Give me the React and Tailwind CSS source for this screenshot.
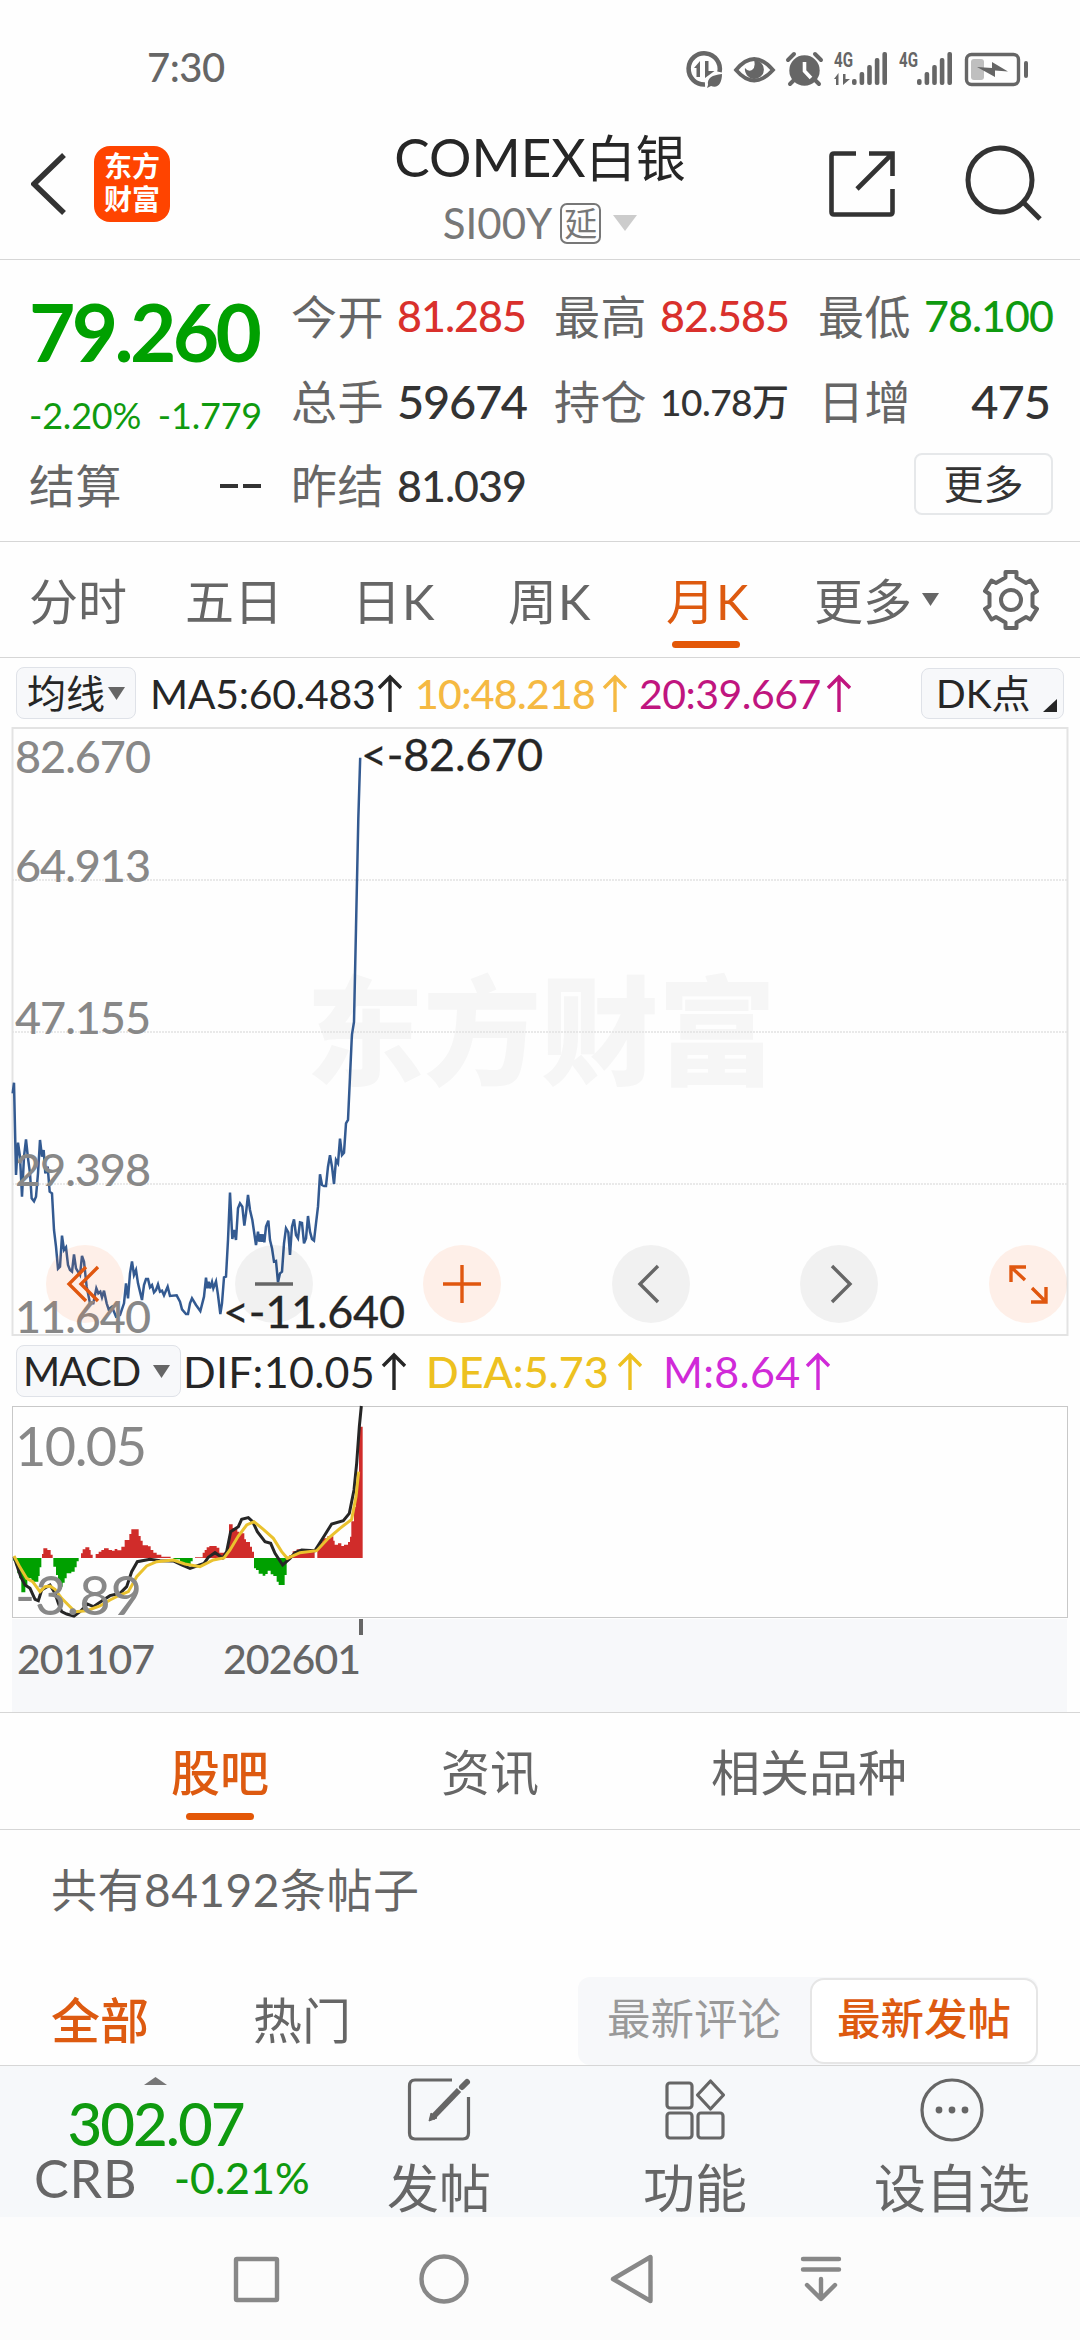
import React from "react";

const PRICE_POINTS =
  "38,160 42,128 48,405 54,308 60,350 66,470 72,350 78,298 84,355 90,400 95,475 102,484 108,470 114,400 120,300 126,350 131,330 136,400 143,380 149,455 156,460 162,570 168,620 174,686 180,680 186,587 192,630 198,622 204,675 210,690 216,695 222,643 228,685 240,705 246,648 252,665 260,740 270,790 280,790 289,745 295,760 301,755 306,772 312,752 320,790 326,808 336,800 348,830 360,825 372,790 378,730 384,775 390,700 396,664 402,705 408,690 414,730 420,755 426,780 432,735 438,717 444,717 450,742 456,735 462,757 468,750 474,733 480,755 486,752 492,766 503,740 510,768 530,766 540,785 546,808 558,822 564,822 570,790 576,775 588,795 601,813 612,770 618,713 622,745 626,725 630,745 636,726 640,745 648,724 654,765 661,822 666,790 672,712 678,710 684,600 690,458 697,597 702,570 708,600 714,505 720,490 727,500 733,557 738,520 744,465 750,510 757,540 768,615 774,575 778,605 782,583 786,605 790,583 793,607 798,560 805,542 810,600 816,625 822,665 828,663 834,727 840,700 846,695 852,610 858,565 865,577 870,645 876,560 882,538 888,585 894,595 900,547 906,549 912,610 918,595 924,528 930,575 936,597 942,602 948,550 954,500 960,403 966,435 972,438 978,438 984,380 990,346 996,380 1002,432 1008,360 1014,370 1020,296 1026,345 1032,338 1038,250 1044,240 1050,110 1055,0 1056,-17 1062,-54 1068,-335 1075,-666 1080.6,-847";

const DIF_POINTS =
  "42,680 62,740 75,765 90,775 105,808 115,812 125,780 150,765 165,790 175,820 185,845 200,852 222,858 240,845 262,822 280,830 310,810 330,797 360,790 380,770 395,725 412,695 450,688 480,692 520,693 545,705 570,715 590,708 612,700 625,682 645,668 668,684 680,665 692,605 715,590 725,568 745,563 758,575 772,605 795,635 812,640 825,670 848,705 870,685 885,668 905,660 945,662 965,630 995,582 1030,572 1048,550 1062,480 1070,400 1078,290 1084,228";

const DEA_POINTS =
  "42,678 60,712 80,745 98,755 120,785 135,770 150,768 165,778 185,805 205,825 225,845 260,842 300,828 330,810 360,795 385,785 410,740 440,708 470,695 520,690 555,702 600,710 640,690 672,684 690,660 715,618 740,585 762,575 790,598 820,625 845,665 862,685 900,668 950,662 985,625 1020,595 1055,568 1068,500 1076,425";

const RED_AREAS = [
  "M126 684V672H130V655H142V660H152V674H158V684Z",
  "M243 684V670H248V658H256V652H268V660H272V674H278V684Z",
  "M287 684V672H296V665H304V660H312V655H326V660H336V662H344V657H352V661H364V650H374V630H388V612H394V598H416V618H422V632H428V646H444V649H452V660H460V668H470V674H484V680H512V684Z",
  "M585 684V682H608V668H614V660H620V652H628V648H650V653H658V668H680V650H684V620H687V583H698V594H712V605H718V610H733V628H738V636H750V650H756V665H762V684Z",
  "M868 684V675H878V664H890V658H925V662H944V684H952V650H960V634H968V625H982V619H1000V632H1004V644H1014V640H1024V648H1032V644H1044V636H1050V620H1054V574H1062V530H1068V490H1073V430H1077V290H1088V684Z",
];

const GREEN_AREAS = [
  "M40 684V692H46V706H52V730H58V745H64V787H76V765H82V745H94V755H115V738H119V712H124V684Z",
  "M160 684V710H168V735H174V770H188V758H194V745H200V730H214V725H224V712H230V694H236V684Z",
  "M520 684V688H540V696H550V702H572V694H578V684Z",
  "M762 684V715H768V720H776V731H788V737H796V732H803V722H812V733H820V738H830V755H836V765H854V735H860V684Z",
];

function Divider() {
  return <div className="h-px w-full shrink-0 bg-[#d6d6d6]" />;
}

function UpArrow() {
  return (
    <svg width="26" height="38" viewBox="0 0 26 38" fill="none" stroke="currentColor" strokeWidth="3.400" className="shrink-0">
      <path d="M13 38V3M2 14L13 3L24 14" />
    </svg>
  );
}

function Caret({ className, w = 17, h = 13 }) {
  return (
    <svg width={w} height={h} viewBox="0 0 17 13" preserveAspectRatio="none" className={className} fill="currentColor">
      <path d="M0 0H17L8.5 13Z" />
    </svg>
  );
}

function SignalBars() {
  return [0, 1, 2, 3, 4].map((i) => (
    <rect key={i} x={i * 7.6} y={[27, 20, 13, 6, 0][i]} width="4.6" height={[6, 13, 20, 27, 33][i]} rx="2" />
  ));
}

function StatusBar() {
  return (
    <div className="flex h-[118px] items-start pl-[147px] pt-[48px] text-[#666]">
      <span className="w-[537px] text-[40px] font-medium leading-[38px] tracking-[-0.5px]">7:30</span>
      <svg width="350" height="44" viewBox="684 45 350 44" fill="#666">
        <g fill="none" stroke="#666" strokeWidth="4.6">
          <path d="M705 81.500A15.600 15.600 0 1 1 719.500 69" />
        </g>
        <path d="M694 65L700 58V74H696.500V65ZM705 58H708.500V68H714.500L705 75Z" />
        <path d="M708 82C707 75 712 72 722 71C722 80 718 86 711 83L707 85Z" />
        <path d="M736 67Q754 45 773 67Q754 88 736 67Z" fill="none" stroke="#666" strokeWidth="3.800" />
        <path d="M754 57A9.500 9.500 0 1 1 745 65Q748 69 752 67Q756 64 754 57Z" />
        <circle cx="804.500" cy="67.500" r="15.200" />
        <path d="M788 57L794 51M821 57L815 51M790 81L794 77M819 81L815 77" stroke="#666" strokeWidth="4" fill="none" strokeLinecap="round" />
        <path d="M804.500 59V68L811 75" stroke="#fff" strokeWidth="3.600" fill="none" />
        <text x="834" y="64" fontSize="21" fontWeight="700" fontFamily="Roboto, sans-serif" textLength="19" lengthAdjust="spacingAndGlyphs">4G</text>
        <path d="M834 76L838.500 70V82H836V76ZM843 71H845.500V76H850L843 82Z" />
        <g transform="translate(852 49)"><SignalBars /></g>
        <text x="899" y="64" fontSize="21" fontWeight="700" fontFamily="Roboto, sans-serif" textLength="19" lengthAdjust="spacingAndGlyphs">4G</text>
        <g transform="translate(917 49)"><SignalBars /></g>
        <rect x="966.500" y="51.500" width="52" height="30" rx="5" fill="none" stroke="#666" strokeWidth="3.400" />
        <rect x="971" y="56" width="13" height="21" rx="3" fill="#bfbfbf" />
        <path d="M977 64L992 65V59L1008 68.500L995 67.500V74Z" />
        <rect x="1024" y="58" width="4" height="17" rx="2" />
      </svg>
    </div>
  );
}

function Header() {
  return (
    <header className="flex h-[141px] items-start text-[#262626]">
      <svg width="36" height="64" viewBox="0 0 36 64" className="ml-[31px] mt-[34px]" fill="none" stroke="#333" strokeWidth="5.500">
        <path d="M33 3L3 32L33 61" />
      </svg>
      <div className="ml-[27px] mt-[28px] flex h-[76px] w-[76px] flex-col items-center justify-center rounded-[16px] bg-[#ff4400] pb-[2px] text-[28px] font-bold leading-[33px] text-white">
        <span>东方</span>
        <span>财富</span>
      </div>
      <div className="ml-[170px] flex w-[400px] flex-col items-center">
        <h1 className="mt-[14px] text-[50px] leading-[50px] whitespace-nowrap">
          <span className="text-[53px]">COMEX</span>白银
        </h1>
        <div className="mt-[18px] flex h-[44px] items-center text-[#777]">
          <span className="text-[42px] leading-none">SI00Y</span>
          <span className="ml-[8px] flex h-[41px] w-[41px] items-center justify-center rounded-[7px] border-2 border-[#777] text-[33px] leading-none">延</span>
          <Caret className="ml-[12px] text-[#ccc]" w={24} h={16} />
        </div>
      </div>
      <svg width="68" height="68" viewBox="0 0 68 68" className="ml-[88px] mt-[32px]" fill="none" stroke="#333" strokeWidth="4.600">
        <path d="M28 3.500H6Q3.500 3.500 3.500 6V62Q3.500 64.500 6 64.500H62Q64.500 64.500 64.500 62V39M41 3.500H64.500V26M29 39L64 4" />
      </svg>
      <svg width="80" height="80" viewBox="0 0 80 80" className="ml-[68px] mt-[26px]" fill="none" stroke="#333" strokeWidth="5">
        <circle cx="36" cy="36" r="32" />
        <path d="M59 58L76 75" />
      </svg>
    </header>
  );
}

function Label({ children }) {
  return <span className="w-[106px] shrink-0 text-[46px] leading-none tracking-[0.5px] text-[#666]">{children}</span>;
}

function Quote() {
  return (
    <section className="h-[281px] pl-[29px] pt-[14px]">
      <div className="flex">
        <div className="flex w-[262px] shrink-0 flex-col">
          <div className="mt-[17px] h-[80px] text-[80px] font-bold leading-[80px] tracking-[-3.600px] text-[#00a000]">79.260</div>
          <div className="mt-[26px] flex w-[233px] justify-between text-[36px] leading-[36px] tracking-[-0.200px] text-[#0f9a0f]">
            <span>-2.20%</span>
            <span>-1.779</span>
          </div>
        </div>
        <div className="grid w-[790px] grid-cols-[263px_264px_232px] grid-rows-[85px_85px]">
          <div className="flex items-center"><Label>今开</Label><b className="w-[128px] text-[43px] font-medium tracking-[-1px] text-[#d9302c]">81.285</b></div>
          <div className="flex items-center"><Label>最高</Label><b className="w-[128px] text-[43px] font-medium tracking-[-1px] text-[#d9302c]">82.585</b></div>
          <div className="flex items-center"><Label>最低</Label><b className="w-[128px] text-[43px] font-medium tracking-[-1px] text-[#0f9a0f]">78.100</b></div>
          <div className="flex items-center"><Label>总手</Label><b className="text-[47px] font-medium tracking-[-1.300px] text-[#333]">59674</b></div>
          <div className="flex items-center"><Label>持仓</Label><b className="whitespace-nowrap text-[37px] font-medium tracking-[-0.500px] text-[#333]">10.78万</b></div>
          <div className="flex items-center justify-between"><Label>日增</Label><b className="text-[47px] font-medium tracking-[-1px] text-[#333]">475</b></div>
        </div>
      </div>
      <div className="flex h-[84px] items-center">
        <div className="flex w-[232px] items-center justify-between">
          <Label>结算</Label>
          <span className="flex gap-[5px]"><i className="h-[4px] w-[18px] bg-[#333]" /><i className="h-[4px] w-[18px] bg-[#333]" /></span>
        </div>
        <div className="ml-[30px] flex items-center">
          <Label>昨结</Label>
          <span className="text-[43px] font-medium tracking-[-1px] text-[#333]">81.039</span>
        </div>
        <div className="-mt-[4px] ml-auto mr-[27px] flex h-[62px] w-[139px] items-center justify-center rounded-[8px] border-2 border-[#e6e8ea] text-[40px] leading-none text-[#333]">更多</div>
      </div>
    </section>
  );
}

function PeriodTabs() {
  return (
    <nav className="flex h-[115px] items-start pl-[29px] pt-[34px] text-[49px] leading-[50px] text-[#666]">
      <span className="w-[156px]">分时</span>
      <span className="w-[167px]">五日</span>
      <span className="w-[156px] tracking-[1px]">日K</span>
      <span className="w-[158px] tracking-[1px]">周K</span>
      <span className="flex w-[148px] flex-col tracking-[1px] text-[#dd5a10]">
        月K
        <span className="ml-[6px] mt-[15px] h-[7px] w-[68px] rounded-full bg-[#e35707]" />
      </span>
      <span>更多</span>
      <Caret className="ml-[10px] mt-[17px]" />
      <svg width="62" height="62" viewBox="0 0 62 62" className="ml-[41px] mt-[-7px]" fill="none" stroke="#666" strokeWidth="4" strokeLinejoin="round">
        <path d="M25.500 3H36.500V8.500L46 14L50.500 11.500L57 22L52.500 25V37L57 40L50.500 50.500L46 48L36.500 53.500V59H25.500V53.500L16 48L11.500 50.500L5 40L9.500 37V25L5 22L11.500 11.500L16 14L25.500 8.500Z" />
        <circle cx="31" cy="31" r="10" />
      </svg>
    </nav>
  );
}

function AverageRow() {
  return (
    <div className="flex h-[69px] items-start px-[16px] pt-[9px] text-[41px] leading-none text-[#262626]">
      <div className="flex h-[52px] w-[120px] items-center rounded-[8px] border border-[#dfe2e8] bg-[#f7f8fa] pl-[10px] text-[39px]">
        均线<Caret className="ml-[3px] text-[#666]" />
      </div>
      <div className="ml-[14px] flex h-[52px] items-center">
        <span className="w-[227px] tracking-[-0.300px]">MA5:60.483</span>
        <UpArrow />
        <span className="ml-[12px] flex items-center font-medium text-[#f5b942]"><span className="w-[187px] tracking-[-0.700px]">10:48.218</span><UpArrow /></span>
        <span className="ml-[11px] flex items-center text-[#c0157f]"><span className="w-[187px] tracking-[-0.500px]">20:39.667</span><UpArrow /></span>
      </div>
      <div className="ml-auto mt-px flex h-[51px] w-[143px] items-center rounded-[8px] border border-[#dfe2e8] bg-[#f7f8fa] pl-[14px] text-[39px]">
        DK点
        <svg width="14" height="13" viewBox="0 0 14 13" className="ml-auto mr-[6px] mt-[24px]"><path d="M14 0V13H0Z" fill="#262626" /></svg>
      </div>
    </div>
  );
}

function RoundButton({ tone, children }) {
  return (
    <span className={"flex h-[78px] w-[78px] items-center justify-center rounded-full " + (tone === "warm" ? "bg-[#ff6a20]/10" : "bg-black/5")}>
      <svg width="78" height="78" viewBox="0 0 78 78" fill="none" stroke={tone === "warm" ? "#e0570f" : "#666"} strokeWidth="3.400">
        {children}
      </svg>
    </span>
  );
}

function PriceChart() {
  return (
    <div className="relative h-[609px] w-full">
      <svg width="1080" height="609" viewBox="0 727 1080 609" className="block">
        <text x="306" y="1076" fontSize="118" fontWeight="900" fill="#f6f6f6" textLength="470">东方财富</text>
        <rect x="12.500" y="728" width="1055" height="607" fill="none" stroke="#e3e3e3" strokeWidth="2" />
        <g stroke="#e2e2e2" strokeWidth="1.500" strokeDasharray="2 1">
          <path d="M12 880H1067M12 1032H1067M12 1184H1067" />
        </g>
        <polyline points={PRICE_POINTS} transform="translate(0 1040) scale(0.33333)" fill="none" stroke="#335a91" strokeWidth="7.500" />
        <g fontSize="45" fontWeight="500" fill="#888">
          <text x="15" y="773" textLength="136">82.670</text>
          <text x="15" y="882" textLength="136">64.913</text>
          <text x="15" y="1034" textLength="136">47.155</text>
          <text x="15" y="1186" textLength="136">29.398</text>
          <text x="15" y="1333" textLength="136">11.640</text>
        </g>
        <g fontSize="45" fill="#262626" stroke="#262626" strokeWidth="0.300">
          <text x="361" y="771" textLength="182">&lt;-82.670</text>
          <text x="223" y="1328" textLength="182">&lt;-11.640</text>
        </g>
      </svg>
      <div className="absolute left-[46px] top-[518px] flex w-[1021px] justify-between">
        <RoundButton tone="warm"><path d="M40 22L23 39L40 56M52 22L35 39L52 56" /></RoundButton>
        <RoundButton><path d="M20 39H58" /></RoundButton>
        <RoundButton tone="warm"><path d="M20 39H58M39 20V58" /></RoundButton>
        <RoundButton><path d="M46 21L28 39L46 57" /></RoundButton>
        <RoundButton><path d="M32 21L50 39L32 57" /></RoundButton>
        <RoundButton tone="warm"><path d="M22 37V22H37M22 22L36 35M57 42V57H42M57 57L43 43" /></RoundButton>
      </div>
    </div>
  );
}

function MacdRow() {
  return (
    <div className="flex h-[69px] items-start pl-[16px] pt-[9px] text-[43px] leading-none text-[#262626]">
      <div className="flex h-[52px] w-[165px] items-center rounded-[8px] border border-[#dfe2e8] bg-[#f7f8fa] pl-[6px] text-[40px]">
        <span className="w-[130px] tracking-[-0.800px]">MACD</span><Caret className="text-[#666]" />
      </div>
      <div className="ml-[2px] flex h-[52px] items-center">
        <span className="w-[198px] tracking-[0.300px]">DIF:10.05</span>
        <UpArrow />
        <span className="ml-[19px] flex items-center font-medium text-[#edc120]"><span className="w-[191px]">DEA:5.73</span><UpArrow /></span>
        <span className="ml-[20px] flex items-center text-[#d02ad8]"><span className="w-[142px] tracking-[0.300px]">M:8.64</span><UpArrow /></span>
      </div>
    </div>
  );
}

function MacdChart() {
  return (
    <svg width="1080" height="307" viewBox="0 1405 1080 307" className="block">
      <rect x="12" y="1619" width="1055" height="93" fill="#f7f8fa" />
      <rect x="12.500" y="1406.500" width="1055" height="211" fill="none" stroke="#c8c8c8" />
      <g transform="translate(0 1330) scale(0.33333)">
        {RED_AREAS.map((d) => <path key={d} d={d} fill="#d02c2a" />)}
        {GREEN_AREAS.map((d) => <path key={d} d={d} fill="#00a000" />)}
        <polyline points={DIF_POINTS} fill="none" stroke="#262626" strokeWidth="9" />
        <polyline points={DEA_POINTS} fill="none" stroke="#eac22e" strokeWidth="9" />
      </g>
      <g fontSize="54" fill="#888">
        <text x="15" y="1466" textLength="132">10.05</text>
        <text x="15" y="1615" textLength="127">-3.89</text>
      </g>
      <rect x="359" y="1619" width="4" height="16" fill="#666" />
      <g fontSize="41" fill="#666" fontWeight="500">
        <text x="17" y="1674" textLength="138">201107</text>
        <text x="223" y="1674" textLength="138">202601</text>
      </g>
    </svg>
  );
}

function Community() {
  return (
    <>
      <nav className="flex h-[116px] items-start pl-[171px] pt-[34px] text-[49px] leading-[50px] text-[#666]">
        <span className="flex w-[270px] flex-col font-medium text-[#dd5a10]">
          股吧
          <span className="ml-[15px] mt-[16px] h-[7px] w-[68px] rounded-full bg-[#e35707]" />
        </span>
        <span className="w-[270px]">资讯</span>
        <span>相关品种</span>
      </nav>
      <Divider />
      <p className="h-[146px] pl-[51px] pt-[35px] text-[46px] leading-[50px] tracking-[0.500px] text-[#666]">共有84192条帖子</p>
      <div className="flex h-[89px] items-center pl-[51px] pr-[42px] text-[49px] leading-none text-[#666]">
        <span className="w-[202px] font-medium text-[#dd5a10]">全部</span>
        <span>热门</span>
        <div className="ml-auto flex h-[88px] w-[460px] items-center rounded-[12px] bg-[#f7f8fa] text-[43.500px]">
          <span className="w-[232px] pb-[3px] text-center text-[#999]">最新评论</span>
          <span className="flex h-[86px] w-[228px] items-center justify-center rounded-[14px] border-2 border-[#e6e6e6] bg-white pb-[3px] font-medium text-[#dd5a10]">最新发帖</span>
        </div>
      </div>
    </>
  );
}

function Action({ className, label, children }) {
  return (
    <div className={"flex flex-col items-center " + className}>
      <svg width="66" height="66" viewBox="0 0 66 66" className="mt-[11px]" fill="none" stroke="#666" strokeWidth="3.200">{children}</svg>
      <span className="mt-[19px] text-[52px] leading-[52px] text-[#666]">{label}</span>
    </div>
  );
}

function BottomBar() {
  return (
    <footer className="flex h-[151px] bg-[#f6f8fa]">
      <div className="flex w-[311px] flex-col items-center">
        <Caret className="mt-[11px] rotate-180 text-[#777]" w={23} h={8} />
        <span className="mt-[8px] text-[60px] font-medium leading-[60px] tracking-[-2px] text-[#0f9a0f]">302.07</span>
        <div className="flex w-full items-center pl-[34px] leading-[50px]">
          <span className="w-[140px] text-[52px] tracking-[0.800px] text-[#666]">CRB</span>
          <span className="text-[43px] font-medium text-[#0f9a0f]">-0.21%</span>
        </div>
      </div>
      <Action className="ml-[63px] w-[130px]" label="发帖">
        <path d="M46 3H9Q3.500 3 3.500 9V56Q3.500 62 9 62H57Q62.500 62 62.500 56V20" />
        <path d="M53 13L26 41" strokeWidth="6" />
        <path d="M23 44L25 36L31 41Z" fill="#666" strokeWidth="1" />
        <path d="M56 10L61 5" strokeWidth="6" strokeLinecap="round" />
      </Action>
      <Action className="ml-[126px] w-[130px]" label="功能">
        <rect x="5" y="6" width="25" height="25" rx="3" />
        <rect x="5" y="36" width="25" height="25" rx="3" />
        <rect x="36" y="36" width="25" height="25" rx="3" />
        <path d="M48.500 4L61.500 18L48.500 32L35.500 18Z" strokeLinejoin="round" />
      </Action>
      <Action className="ml-[112px] w-[160px]" label="设自选">
        <circle cx="33" cy="33" r="30" />
        <g fill="#666" stroke="none"><circle cx="20" cy="33" r="3.400" /><circle cx="33" cy="33" r="3.400" /><circle cx="46" cy="33" r="3.400" /></g>
      </Action>
    </footer>
  );
}

function SystemNav() {
  return (
    <div className="flex h-[123px] items-start bg-[#fcfcfc] pt-[35px]">
      <svg width="640" height="56" viewBox="220 2252 640 56" className="ml-[220px]" fill="none" stroke="#888" strokeWidth="4.400" strokeLinejoin="round">
        <rect x="236" y="2259" width="41" height="41" rx="1" />
        <circle cx="444" cy="2279" r="22.500" />
        <path d="M650.500 2257V2301L613 2279Z" />
        <path d="M803 2259H839M803 2269.500H839M821 2279V2298M807 2285L821 2299L835 2285" strokeLinecap="round" />
      </svg>
    </div>
  );
}

export default function App() {
  return (
    <main className="flex h-[2340px] w-[1080px] flex-col overflow-hidden bg-[#fefefe] font-['Lato','Noto_Sans_CJK_SC',sans-serif]">
      <StatusBar />
      <Header />
      <Divider />
      <Quote />
      <Divider />
      <PeriodTabs />
      <Divider />
      <AverageRow />
      <PriceChart />
      <MacdRow />
      <MacdChart />
      <Divider />
      <Community />
      <Divider />
      <BottomBar />
      <SystemNav />
    </main>
  );
}
